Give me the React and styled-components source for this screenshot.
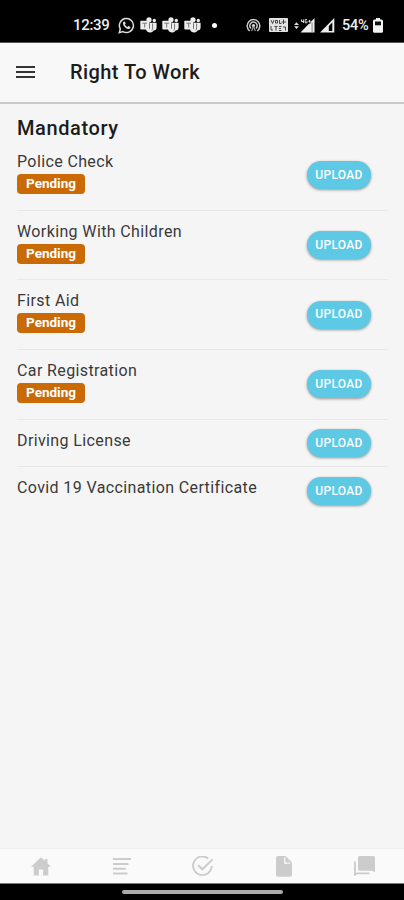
import React from "react";
import styled, { createGlobalStyle } from "styled-components";

const DOCUMENTS = [
  { name: "Police Check", status: "Pending" },
  { name: "Working With Children", status: "Pending" },
  { name: "First Aid", status: "Pending" },
  { name: "Car Registration", status: "Pending" },
  { name: "Driving License" },
  { name: "Covid 19 Vaccination Certificate" },
];

function WhatsappIcon() {
  return (
    <svg width="17" height="17" viewBox="0 0 17 17" fill="none">
      <path
        d="M1.3 15.6l1-3.7a7 7 0 1 1 2.7 2.7z"
        stroke="#dedede"
        strokeWidth="1.5"
      />
      <path
        d="M5.6 4.7l1.2-.2.9 2-.8 1.1c.6 1.2 1.4 2 2.6 2.5l1-1.1 2 1-.3 1.3c-.5.7-1.5.9-2.4.6C7.6 11.2 5.7 9.3 5 7c-.2-.9 0-1.7.6-2.3z"
        fill="#dedede"
      />
    </svg>
  );
}

function TeamsIcon() {
  return (
    <svg width="17" height="16" viewBox="0 0 17 16">
      <circle cx="9" cy="2.8" r="2.6" fill="#ededed" />
      <circle cx="14.3" cy="3.5" r="1.7" fill="#ededed" />
      <path
        d="M7 5.8h9.6v4.7c0 2-1.2 3-3 3-.9 1.5-2.2 2-3.5 2-2.1 0-3.6-1.2-4-3z"
        fill="#ededed"
      />
      <path d="M12.6 6.5v4.3c0 1.2-.3 2-.8 2.7" stroke="#777" fill="none" />
      <rect x="0.3" y="3.8" width="8.7" height="8.7" rx="0.8" fill="#ededed" />
      <path d="M2.4 6.2h4.6M4.7 6.2v4.4M9.5 6.2v5.6" stroke="#777" fill="none" />
    </svg>
  );
}

function HotspotIcon() {
  return (
    <svg width="15" height="15" viewBox="0 0 15 15" fill="none">
      <path
        d="M3.8 13a6.3 6.3 0 1 1 7.4 0M5 10.5a3.7 3.7 0 1 1 5 0"
        stroke="#c8c8c8"
        strokeWidth="1.5"
      />
      <circle cx="7.5" cy="7.5" r="1.6" fill="#ddd" />
      <path d="M7.5 8l-1.8 5M7.5 8l1.8 5" stroke="#aaa" strokeWidth="1.1" />
    </svg>
  );
}

function VolteIcon() {
  return (
    <svg width="19" height="14" viewBox="0 0 19 14" fill="none">
      <rect width="19" height="14" rx="0.8" fill="#e2e2e2" />
      <path
        d="M2 2l1.5 3.5L5 2M6.5 2.5h2v2.5h-2zM10.5 2v3.5h2M14.5 1.5v4.5M12.5 4h4.5M2 8v4h2M5.5 8.5h3M7 8.5v4M10 8.5h2.5M10 10.5h2M10 12.5h2.5M14 9h2.5v3.5"
        stroke="#333"
        strokeWidth="0.9"
      />
    </svg>
  );
}

function DataSignalIcon() {
  return (
    <svg width="22" height="15" viewBox="0 0 22 15">
      <path d="M2.5 4.2l2.5 2.9H0zM0 8.2h5l-2.5 2.9z" fill="#ddd" />
      <path d="M6.5 14.5L20.5 0v14.5z" fill="#eee" />
      <path d="M7 0.8h9.5v4.7H7z" fill="#000" />
      <path
        d="M7.5 1.5v2h2.6M9.4 1.5v3.5M13 1.6h-1.8v3.2h1.8v-1.6M14.3 3.2h2.4M15.5 2v2.5"
        stroke="#ddd"
        strokeWidth="1"
        fill="none"
      />
      <path d="M18.1 4.5v10" stroke="#777" strokeWidth="0.9" />
    </svg>
  );
}

function SignalIcon() {
  return (
    <svg width="15" height="15" viewBox="0 0 15 15">
      <path d="M0 14.5L14.3 0v14.5z" fill="#eee" />
      <path d="M8.8 8l3.5-3.6v8.5H8.8z" fill="#000" />
    </svg>
  );
}

function BatteryIcon() {
  return (
    <svg width="10" height="15" viewBox="0 0 10 15">
      <path
        d="M3 0h4v1.5h1.5q1.5 0 1.5 1.5v10.5q0 1.3-1.5 1.3h-7Q0 14.8 0 13.5V3q0-1.5 1.5-1.5H3z"
        fill="#f4f4f4"
      />
      <rect x="2" y="3.5" width="6" height="3.8" fill="#111" />
    </svg>
  );
}

function HomeIcon() {
  return (
    <svg width="20" height="19" viewBox="0 0 20 19">
      <path
        d="M10 .3l3.8 3.5V2h2.7v4.3L20 9.8h-2.7V18.5h-5.2v-6H7.9v6H2.7V9.8H0z"
        fill="#ccc"
      />
    </svg>
  );
}

function ListIcon() {
  return (
    <svg width="18" height="17" viewBox="0 0 18 17">
      <path
        d="M0 1h18M0 6h15.5M0 10.7h12.7M0 15.5h14.5"
        stroke="#ccc"
        strokeWidth="1.9"
      />
    </svg>
  );
}

function CheckIcon() {
  return (
    <svg width="22" height="21" viewBox="0 0 22 21" fill="none">
      <path
        d="M16.2 2.5A9.3 9.3 0 1 0 19.7 10"
        stroke="#ccc"
        strokeWidth="1.9"
      />
      <path d="M6.2 9.2l4.2 4.1L20.5 3.4" stroke="#ccc" strokeWidth="1.9" />
    </svg>
  );
}

function FileIcon() {
  return (
    <svg width="16" height="21" viewBox="0 0 16 21">
      <path
        d="M2 0h7.5L16 6.5V19q0 1.8-1.8 1.8H1.8Q0 20.8 0 19V2Q0 0 2 0z"
        fill="#ccc"
      />
      <path d="M8.7 1.6v5.5h5.5" stroke="#f8f8f8" strokeWidth="1.4" fill="none" />
    </svg>
  );
}

function ChatIcon() {
  return (
    <svg width="22" height="20" viewBox="0 0 22 20">
      <path
        d="M5.5 0h14q1.5 0 1.5 1.5V16.5l-2.5-1.8h-13Q4 14.7 4 13.2V1.5Q4 0 5.5 0z"
        fill="#ccc"
      />
      <path d="M1 5.5V18.7l2-1.4h12.5" stroke="#ccc" strokeWidth="1.8" fill="none" />
    </svg>
  );
}

function StatusBar() {
  return (
    <StatusStyle>
      <div className="group">
        <span className="time">12:39</span>
        <WhatsappIcon />
        <div className="apps">
          <TeamsIcon />
          <TeamsIcon />
          <TeamsIcon />
        </div>
        <Dot />
      </div>
      <div className="group right">
        <HotspotIcon />
        <VolteIcon />
        <DataSignalIcon />
        <SignalIcon />
        <span className="battery">54%</span>
        <BatteryIcon />
      </div>
    </StatusStyle>
  );
}

function DocumentRow({ name, status }) {
  return (
    <Row $tall={Boolean(status)}>
      <div className="info">
        <div className="name">{name}</div>
        {status && <Badge>{status}</Badge>}
      </div>
      <UploadButton>UPLOAD</UploadButton>
    </Row>
  );
}

function App() {
  return (
    <Screen>
      <GlobalStyle />
      <StatusBar />
      <Header>
        <MenuButton aria-label="Menu">
          <span />
          <span />
          <span />
        </MenuButton>
        <h1>Right To Work</h1>
      </Header>
      <Content>
        <h2>Mandatory</h2>
        {DOCUMENTS.map((doc) => (
          <DocumentRow key={doc.name} {...doc} />
        ))}
      </Content>
      <TabBar>
        <Tab><HomeIcon /></Tab>
        <Tab><ListIcon /></Tab>
        <Tab><CheckIcon /></Tab>
        <Tab><FileIcon /></Tab>
        <Tab><ChatIcon /></Tab>
      </TabBar>
      <GestureBar>
        <div className="handle" />
      </GestureBar>
    </Screen>
  );
}

const GlobalStyle = createGlobalStyle`
  * {
    box-sizing: border-box;
  }
  body {
    margin: 0;
    font-family: Roboto, "Liberation Sans", sans-serif;
  }
  svg {
    display: block;
    flex: none;
  }
`;

const Screen = styled.div`
  width: 404px;
  height: 900px;
  display: flex;
  flex-direction: column;
  background: #f5f5f5;
  overflow: hidden;
`;

const StatusStyle = styled.div`
  height: 43px;
  flex: none;
  display: flex;
  justify-content: space-between;
  padding: 8px 21px 0 73px;
  background: #000;
  border-bottom: 1px solid #555;
  color: #eee;
  .group {
    display: flex;
    align-items: center;
    height: 34px;
  }
  .right {
    svg:nth-child(2) {
      margin-left: 8px;
    }
    svg:nth-child(3) {
      margin-left: 6px;
    }
    svg:nth-child(4) {
      margin-left: 4px;
    }
  }
  .time {
    width: 45px;
    font-size: 15px;
    font-weight: 500;
    letter-spacing: -0.3px;
  }
  .apps {
    display: flex;
    gap: 5px;
    margin-left: 5px;
  }
  .battery {
    width: 31px;
    margin-left: 7px;
    font-size: 14.5px;
    font-weight: 500;
    letter-spacing: -0.3px;
  }
`;

const Dot = styled.div`
  width: 5px;
  height: 5px;
  margin-left: 11px;
  border-radius: 50%;
  background: #fff;
`;

const Header = styled.header`
  height: 61px;
  flex: none;
  display: flex;
  align-items: center;
  padding: 0 0 1px 16px;
  background: #f8f8f8;
  border-bottom: 2px solid #c9c9c9;
  h1 {
    margin: 0 0 0 35px;
    color: #1c1c1c;
    font-size: 20px;
    font-weight: 500;
    letter-spacing: 0.43px;
  }
`;

const MenuButton = styled.button`
  width: 19px;
  padding: 0;
  border: 0;
  background: none;
  display: flex;
  flex-direction: column;
  gap: 3px;
  span {
    height: 2px;
    background: #333;
  }
`;

const Content = styled.main`
  flex: 1;
  padding: 12px 16px 0 17px;
  h2 {
    height: 25px;
    margin: 0;
    color: #1c1c1c;
    font-size: 20px;
    font-weight: 500;
    line-height: 25px;
    letter-spacing: 0.6px;
  }
`;

const Row = styled.div`
  height: ${({ $tall }) => ($tall ? "69.7px" : "47.7px")};
  display: flex;
  align-items: center;
  justify-content: space-between;
  padding-right: 17px;
  border-bottom: 1px solid #e8e8e8;
  &:last-child {
    border-bottom: 0;
  }
  .info {
    align-self: flex-start;
    padding-top: 11px;
  }
  .name {
    height: 20px;
    margin-bottom: 2px;
    color: #3a3a3a;
    font-size: 16px;
    line-height: 20px;
    letter-spacing: 0.38px;
  }
`;

const Badge = styled.span`
  display: block;
  width: 68px;
  height: 20px;
  border-radius: 4px;
  background: #c96a05;
  color: #fff;
  font-size: 13.5px;
  font-weight: 700;
  line-height: 18px;
  text-align: center;
`;

const UploadButton = styled.button`
  width: 64px;
  height: 28px;
  padding: 0;
  border: 0;
  border-radius: 14px;
  background: #5dc9e4;
  box-shadow: 0 1px 3px rgba(0, 0, 0, 0.4);
  color: #fff;
  font-family: inherit;
  font-size: 12px;
  font-weight: 500;
  line-height: 27px;
  letter-spacing: 0.3px;
`;

const TabBar = styled.nav`
  height: 35px;
  flex: none;
  display: grid;
  grid-template-columns: repeat(5, 81px);
  background: #fafafa;
  border-top: 1px solid #eee;
`;

const Tab = styled.a`
  display: flex;
  align-items: center;
  justify-content: center;
`;

const GestureBar = styled.div`
  height: 17px;
  flex: none;
  display: flex;
  justify-content: center;
  padding-top: 6px;
  background: #000;
  border-top: 1px solid #777;
  .handle {
    width: 161px;
    height: 4px;
    border-radius: 2px;
    background: #aaa;
  }
`;

export default App;
